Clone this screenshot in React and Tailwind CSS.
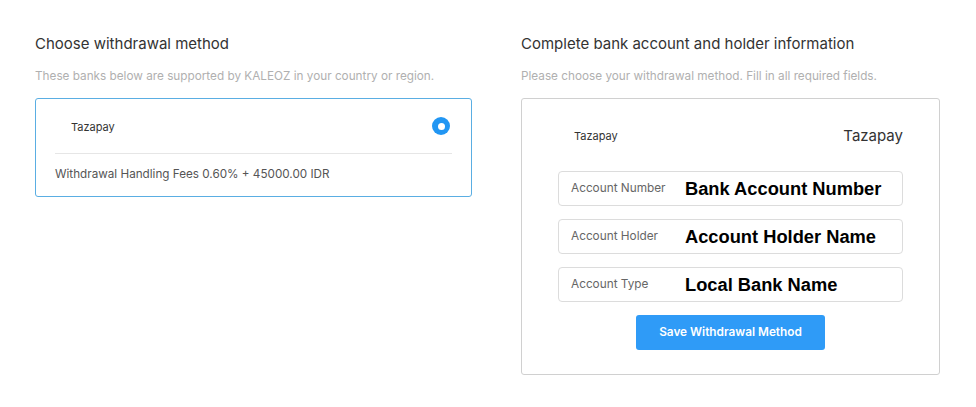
import React from 'react';

const sans = { fontFamily: 'Inter, "Noto Sans", sans-serif' };

const Field = ({ label, value }) => (
  <div className="flex items-center h-[35px] border border-[#dcdcdc] rounded-[4px] pl-[12px]">
    <span className="w-[114px] text-[11.8px] text-[#666]">{label}</span>
    <span
      className="text-[18.3px] font-bold text-black"
      style={{ fontFamily: '"Liberation Sans", Arial, sans-serif' }}
    >
      {value}
    </span>
  </div>
);

const App = () => {
  return (
    <div className="w-[976px] h-[407px] bg-white flex pl-[35px] pt-[34px]" style={sans}>
      <div className="w-[437px]">
        <h2 className="text-[15px] leading-[20px] text-[#333]">Choose withdrawal method</h2>
        <p className="mt-[14px] text-[11.75px] leading-[16px] text-[#b0b0b0]">
          These banks below are supported by KALEOZ in your country or region.
        </p>
        <div className="mt-[14px] border-[1.5px] border-[#5aaee3] rounded-[3px] px-[19px]">
          <div className="h-[55px] flex items-center justify-between border-b border-[#e6e6e6] pl-[16px] pr-[2px]">
            <span className="text-[11px] text-[#333] pt-[2px]">Tazapay</span>
            <span className="w-[18px] h-[18px] rounded-full bg-[#2196f3] flex items-center justify-center">
              <span className="w-[7px] h-[7px] rounded-full bg-white" />
            </span>
          </div>
          <div className="h-[42px] flex items-center text-[11.7px] text-[#555]">
            Withdrawal Handling Fees 0.60% + 45000.00 IDR
          </div>
        </div>
      </div>
      <div className="w-[419px] ml-[49px]">
        <h2 className="text-[15px] leading-[20px] text-[#333]">Complete bank account and holder information</h2>
        <p className="mt-[14px] text-[11.75px] leading-[16px] text-[#b0b0b0]">
          Please choose your withdrawal method. Fill in all required fields.
        </p>
        <div className="mt-[14px] h-[277px] border border-[#d0d0d0] rounded-[3px] px-[36px]">
          <div className="h-[72px] flex items-center justify-between pl-[16px] pt-[2px]">
            <span className="text-[11px] text-[#333]">Tazapay</span>
            <span className="text-[15px] text-[#333]">Tazapay</span>
          </div>
          <div className="flex flex-col gap-[13px]">
            <Field label="Account Number" value="Bank Account Number" />
            <Field label="Account Holder" value="Account Holder Name" />
            <Field label="Account Type" value="Local Bank Name" />
          </div>
          <div className="flex justify-center mt-[13px]">
            <button className="w-[189px] h-[35px] rounded-[3px] bg-[#2f9bf7] text-white text-[11.8px] font-semibold">
              Save Withdrawal Method
            </button>
          </div>
        </div>
      </div>
    </div>
  );
};

export default App;
